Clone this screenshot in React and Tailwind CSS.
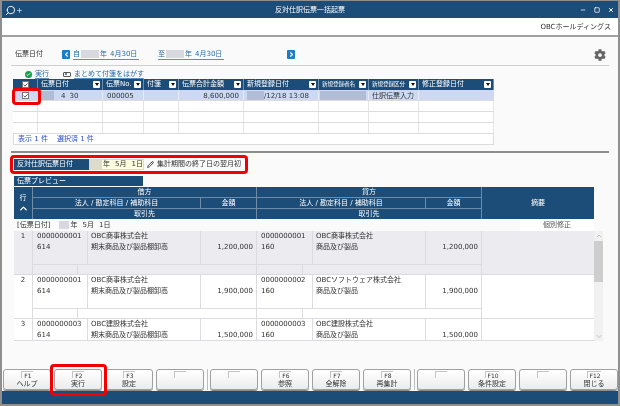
import { FaCog } from "react-icons/fa";
import { Check, ChevronDown, ChevronLeft, ChevronRight, ChevronUp, Minus, Pencil, Plus, Search, Square, X } from "lucide-react";

const topCols = [
  { label: "伝票日付", w: "w-[65px]", text: "" },
  { label: "伝票No.", w: "w-[41px]", text: "" },
  { label: "付箋", w: "w-[35px]", text: "" },
  { label: "伝票合計金額", w: "w-[65px]", text: "" },
  { label: "新規登録日付", w: "w-[75px]", text: "" },
  { label: "新規登録者名", w: "w-[50px]", text: "text-[5.5px]" },
  { label: "新規登録区分", w: "w-[50px]", text: "text-[5.5px]" },
  { label: "修正登録日付", w: "w-[75px]", text: "" },
];

const rows = [
  {
    no: 1, bg: "bg-[#ebebf0]",
    dr: ["0000000001", "614", "OBC商事株式会社", "期末商品及び製品棚卸高", "1,200,000"],
    cr: ["0000000001", "160", "OBC商事株式会社", "商品及び製品", "1,200,000"],
  },
  {
    no: 2, bg: "bg-white",
    dr: ["0000000001", "614", "OBC商事株式会社", "期末商品及び製品棚卸高", "1,900,000"],
    cr: ["0000000002", "160", "OBCソフトウェア株式会社", "商品及び製品", "1,900,000"],
  },
  {
    no: 3, bg: "bg-white",
    dr: ["0000000003", "614", "OBC建設株式会社", "期末商品及び製品棚卸高", "1,500,000"],
    cr: ["0000000003", "160", "OBC建設株式会社", "商品及び製品", "1,500,000"],
  },
];

const keys = [
  [["F1", "ヘルプ"], ["F2", "実行"], ["F3", "設定"], ["", ""]],
  [["", ""], ["F6", "参照"], ["F7", "全解除"], ["F8", "再集計"]],
  [["", ""], ["F10", "条件設定"], ["", ""], ["F12", "閉じる"]],
];

function Masked({ w }) {
  return <span className={`inline-block h-[8px] ${w} bg-[#d8d8e0]`} />;
}

function CheckBox() {
  return (
    <span className="flex h-[7px] w-[7px] items-center justify-center border border-[#777] bg-white">
      <Check size={6} strokeWidth={4} className="text-[#222]" />
    </span>
  );
}

function FilterBtn() {
  return (
    <span className="flex h-[7px] w-[7px] shrink-0 items-center justify-center rounded-[1px] bg-white">
      <span className="h-0 w-0 border-x-[2px] border-t-[3px] border-x-transparent border-t-[#111]" />
    </span>
  );
}

function DateLink({ prefix }) {
  return (
    <span className="flex w-[66px] items-center border-b border-[#5d8fc0] text-[#2a6aa8]">
      <span className="mr-[1px]">{prefix}</span>
      <Masked w="w-[18px]" />
      <span className="ml-[1px]">年</span>
      <span className="ml-[3px]">4月30日</span>
    </span>
  );
}

function TopTable() {
  const cells = ["w-[25px]", ...topCols.map((c) => c.w)];
  return (
    <div className="w-[481px] bg-white">
      <div className="flex h-[11px] bg-[#1c4c78] text-white">
        <div className="flex w-[25px] items-center justify-center border-r border-[#6d8aa6]">
          <CheckBox />
        </div>
        {topCols.map((c) => (
          <div key={c.label} className={`${c.w} flex items-center justify-between border-r border-[#6d8aa6] pl-[3px] pr-[2px]`}>
            <span className={`whitespace-nowrap ${c.text}`}>{c.label}</span>
            <FilterBtn />
          </div>
        ))}
      </div>
      <div className="flex h-[11px] border-b border-[#dcdcdc] bg-[#cfd8f3] pt-[1px] leading-[10px] text-[#333]">
        <div className="flex w-[25px] items-center justify-center"><CheckBox /></div>
        <div className="flex w-[65px] items-center border-r border-[#e6e9f6]">
          <span className="ml-[3px] h-[9px] w-[13px] bg-[#b4bbd6]" />
          <span className="ml-[7px]">4</span>
          <span className="ml-[4px]">30</span>
        </div>
        <div className="flex w-[41px] items-center border-r border-[#e6e9f6] pl-[4px]">000005</div>
        <div className="w-[35px] border-r border-[#e6e9f6]" />
        <div className="flex w-[65px] items-center justify-end border-r border-[#e6e9f6] pr-[4px]">8,600,000</div>
        <div className="flex w-[75px] items-center border-r border-[#e6e9f6] pl-[3px]">
          <span className="h-[9px] w-[17px] bg-[#b4bbd6]" />
          <span className="whitespace-nowrap">/12/18 13:08</span>
        </div>
        <div className="flex w-[50px] items-center border-r border-[#e6e9f6] px-[1px]">
          <span className="h-[9px] w-[46px] bg-[#b4bbd6]" />
        </div>
        <div className="flex w-[50px] items-center whitespace-nowrap border-r border-[#e6e9f6] pl-[3px]">仕訳伝票入力</div>
        <div className="w-[75px]" />
      </div>
      {[0, 1, 2].map((r) => (
        <div key={r} className="flex h-[11px] border-b border-[#dcdcdc]">
          {cells.map((w, i) => (
            <div key={i} className={`${w} border-r border-[#e4e4e4]`} />
          ))}
        </div>
      ))}
      <div className="flex h-[11px] items-center gap-[9px] border-x border-b border-[#dcdcdc] pl-[4px] text-[#2b50d0]">
        <span>表示 1 件</span>
        <span>選択済 1 件</span>
      </div>
    </div>
  );
}

function PreviewHead() {
  const line = "border-[#6d8aa6]";
  return (
    <div className="grid h-[32px] w-[580px] grid-cols-[19px_168px_56px_169px_56px_112px] grid-rows-[11px_11px_10px] bg-[#1c4c78] text-center leading-[10px] text-white">
      <div className={`row-span-3 flex flex-col items-center justify-center border-r ${line}`}>
        <span>行</span>
        <ChevronUp size={11} strokeWidth={3} />
      </div>
      <div className={`col-span-2 border-r border-b ${line}`}>借方</div>
      <div className={`col-span-2 border-r border-b ${line}`}>貸方</div>
      <div className="row-span-3 flex items-center justify-center">摘要</div>
      <div className={`border-r border-b ${line}`}>法人 / 勘定科目 / 補助科目</div>
      <div className={`border-r border-b ${line}`}>金額</div>
      <div className={`border-r border-b ${line}`}>法人 / 勘定科目 / 補助科目</div>
      <div className={`border-r border-b ${line}`}>金額</div>
      <div className={`col-span-2 border-r ${line}`}>取引先</div>
      <div className={`col-span-2 border-r ${line}`}>取引先</div>
    </div>
  );
}

function Side({ data }) {
  const line = "border-r border-[#dcdce0]";
  return (
    <>
      <div className={`${line} pl-[4px] leading-[11px]`}>
        <div>{data[0]}</div>
        <div>{data[1]}</div>
      </div>
      <div className={`${line} pl-[3px] leading-[11px]`}>
        <div className="whitespace-nowrap">{data[2]}</div>
        <div className="whitespace-nowrap">{data[3]}</div>
      </div>
      <div className={`${line} pr-[3px] pt-[11px] text-right leading-[11px]`}>{data[4]}</div>
    </>
  );
}

function PreviewRow({ row }) {
  return (
    <div className={`grid h-[44px] w-[580px] shrink-0 grid-cols-[19px_55px_113px_56px_56px_113px_56px_112px] grid-rows-[33px_11px] border-b border-[#dcdce0] ${row.bg}`}>
      <div className="row-span-2 border-r border-[#dcdce0] text-center leading-[11px]">{row.no}</div>
      <Side data={row.dr} />
      <Side data={row.cr} />
      <div className="row-span-2" />
      <div className="col-span-3 grid grid-cols-[45px_1fr] border-y border-r border-[#dcdce0]">
        <div className="border-r border-[#dcdce0]" />
      </div>
      <div className="col-span-3 grid grid-cols-[46px_1fr] border-y border-r border-[#dcdce0]">
        <div className="border-r border-[#dcdce0]" />
      </div>
    </div>
  );
}

function FnKey({ fkey, label }) {
  return (
    <div className="flex h-[21px] w-[48px] flex-col items-center rounded-[3px] border border-[#a0a0a0] bg-gradient-to-b from-[#ffffff] to-[#ececec] text-[#333] shadow-[0_1px_0_#8a8a8a]">
      <span className="mt-[1px] h-[7px] min-w-[12px] border-l border-t border-[#c4c4c4] pl-[1px] text-center text-[6px] leading-[7px]">{fkey}</span>
      <span className="mt-[2px] leading-[9px]">{label}</span>
    </div>
  );
}

export default function App() {
  return (
    <div className="relative flex h-[406px] w-[620px] flex-col overflow-hidden border-x-2 border-t border-b-2 border-[#8f8f8f] bg-[#fafafa] font-['DejaVu_Sans','Noto_Sans_CJK_JP',sans-serif] text-[7px] text-[#333] blur-[0.3px]">
      {/* title bar */}
      <div className="relative flex h-[17px] shrink-0 items-center justify-center bg-[#1c4c78] pt-[1px] text-white">
        <div className="absolute left-[3px] flex items-center">
          <Search size={11} className="-scale-x-100" />
          <Plus size={7} />
        </div>
        <span>反対仕訳伝票一括起票</span>
        <div className="absolute right-[4px] flex items-center gap-[8px]">
          <Minus size={6} strokeWidth={3} />
          <Square size={6} strokeWidth={3} />
          <X size={6} strokeWidth={4} />
        </div>
      </div>
      <div className="flex h-[17px] shrink-0 items-center justify-end bg-white pr-[7px] pt-[2px]">OBCホールディングス</div>
      <div className="h-[2px] shrink-0 bg-[#a0a0a0]" />

      {/* body */}
      <div className="flex flex-1 flex-col pl-[9px]">
        <div className="mt-[10px] flex h-[14px] w-[598px] items-center pt-[1px]">
          <span className="ml-[4px] w-[47px]">伝票日付</span>
          <span className="flex h-[9px] w-[8px] items-center justify-center rounded-[1px] bg-[#1a7fc8] text-white">
            <ChevronLeft size={7} strokeWidth={4} />
          </span>
          <span className="ml-[3px]"><DateLink prefix="自" /></span>
          <span className="ml-[19px]"><DateLink prefix="至" /></span>
          <span className="ml-[63px] flex h-[9px] w-[8px] items-center justify-center rounded-[1px] bg-[#1a7fc8] text-white">
            <ChevronRight size={7} strokeWidth={4} />
          </span>
          <FaCog size={12} className="ml-auto mr-[3px] text-[#666]" />
        </div>
        <div className="mt-[4px] h-px w-[598px] bg-[#cfcfcf]" />
        <div className="ml-[14px] mt-[3px] flex h-[10px] items-center">
          <span className="flex h-[7px] w-[7px] items-center justify-center rounded-full bg-[#1a9a4a] text-white">
            <Check size={5} strokeWidth={4} />
          </span>
          <span className="ml-[3px] border-b border-[#5d8fc0] leading-[8px] text-[#2a6aa8]">実行</span>
          <span className="ml-[14px] flex h-[5px] w-[8px] items-center rounded-[1px] border border-[#555] pl-[1px]">
            <span className="h-[2px] w-[2px] rounded-full bg-[#555]" />
          </span>
          <span className="ml-[3px] border-b border-[#5d8fc0] leading-[8px] text-[#2a6aa8]">まとめて付箋をはがす</span>
        </div>
        <div className="ml-[2px]"><TopTable /></div>

        <div className="mt-[6px] h-[2px] w-[598px] bg-[#8c8c8c]" />

        <div className="ml-[3px] mt-[6px] flex h-[11px] items-center">
          <span className="flex h-[11px] w-[75px] items-center bg-[#1c4c78] pl-[3px] text-white">反対仕訳伝票日付</span>
          <span className="flex h-[11px] w-[55px] items-center border border-[#dedcb4] bg-[#fdfde0]">
            <span className="h-[9px] w-[12px] bg-[#dcdccc]" />
            <span className="ml-[1px]">年</span>
            <span className="ml-[5px]">5月</span>
            <span className="ml-[5px]">1日</span>
          </span>
          <Pencil size={7} strokeWidth={3} className="ml-[3px] text-[#333]" />
          <span className="ml-[3px]">集計期間の終了日の翌月初</span>
        </div>

        <div className="ml-[3px] mt-[6px] flex h-[10px] w-[129px] items-center bg-[#1c4c78] pl-[3px] text-white">伝票プレビュー</div>
        <div className="ml-[3px] mt-px"><PreviewHead /></div>
        <div className="ml-[3px] flex h-[12px] w-[580px] items-center justify-between bg-[#fafafa]">
          <span className="ml-[3px] flex items-center">
            [伝票日付]
            <Masked w="ml-[9px] w-[10px]" />
            <span className="ml-[1px]">年</span>
            <span className="ml-[5px]">5月</span>
            <span className="ml-[5px]">1日</span>
          </span>
          <span className="flex h-[12px] w-[74px] items-center justify-center bg-white text-[#555]">個別修正</span>
        </div>
        <div className="ml-[3px] flex h-[110px] w-[589px] overflow-hidden">
          <div className="flex w-[580px] flex-col overflow-hidden border-b border-[#dcdce0]">
            {rows.map((r) => (
              <PreviewRow key={r.no} row={r} />
            ))}
          </div>
          <div className="flex w-[9px] flex-col bg-[#f1f1f1]">
            <ChevronUp size={8} className="mx-auto h-[10px] text-[#aaa]" />
            <div className="h-[41px] bg-[#cdcdcd]" />
            <ChevronDown size={8} className="mx-auto mt-auto h-[9px] text-[#aaa]" />
          </div>
        </div>
      </div>

      {/* function keys */}
      <div className="flex h-[22px] shrink-0 items-start pl-[1px]">
        {keys.map((group, g) => (
          <div key={g} className={`flex gap-[3px] ${g > 0 ? "ml-[3px] border-l border-[#bdbdbd] pl-[2px]" : ""}`}>
            {group.map(([k, l], i) => (
              <FnKey key={i} fkey={k} label={l} />
            ))}
          </div>
        ))}
      </div>
      <div className="h-[13px] shrink-0 bg-[#1c4c78]" />

      {/* red highlights */}
      <div className="absolute left-[10px] top-[87px] h-[17px] w-[29px] rounded-[4px] border-[3px] border-[#f00000]" />
      <div className="absolute left-[8px] top-[154px] h-[19px] w-[238px] rounded-[4px] border-[3px] border-[#f00000]" />
      <div className="absolute left-[48px] top-[363px] h-[32px] w-[57px] rounded-[4px] border-[3px] border-[#f00000]" />
    </div>
  );
}
